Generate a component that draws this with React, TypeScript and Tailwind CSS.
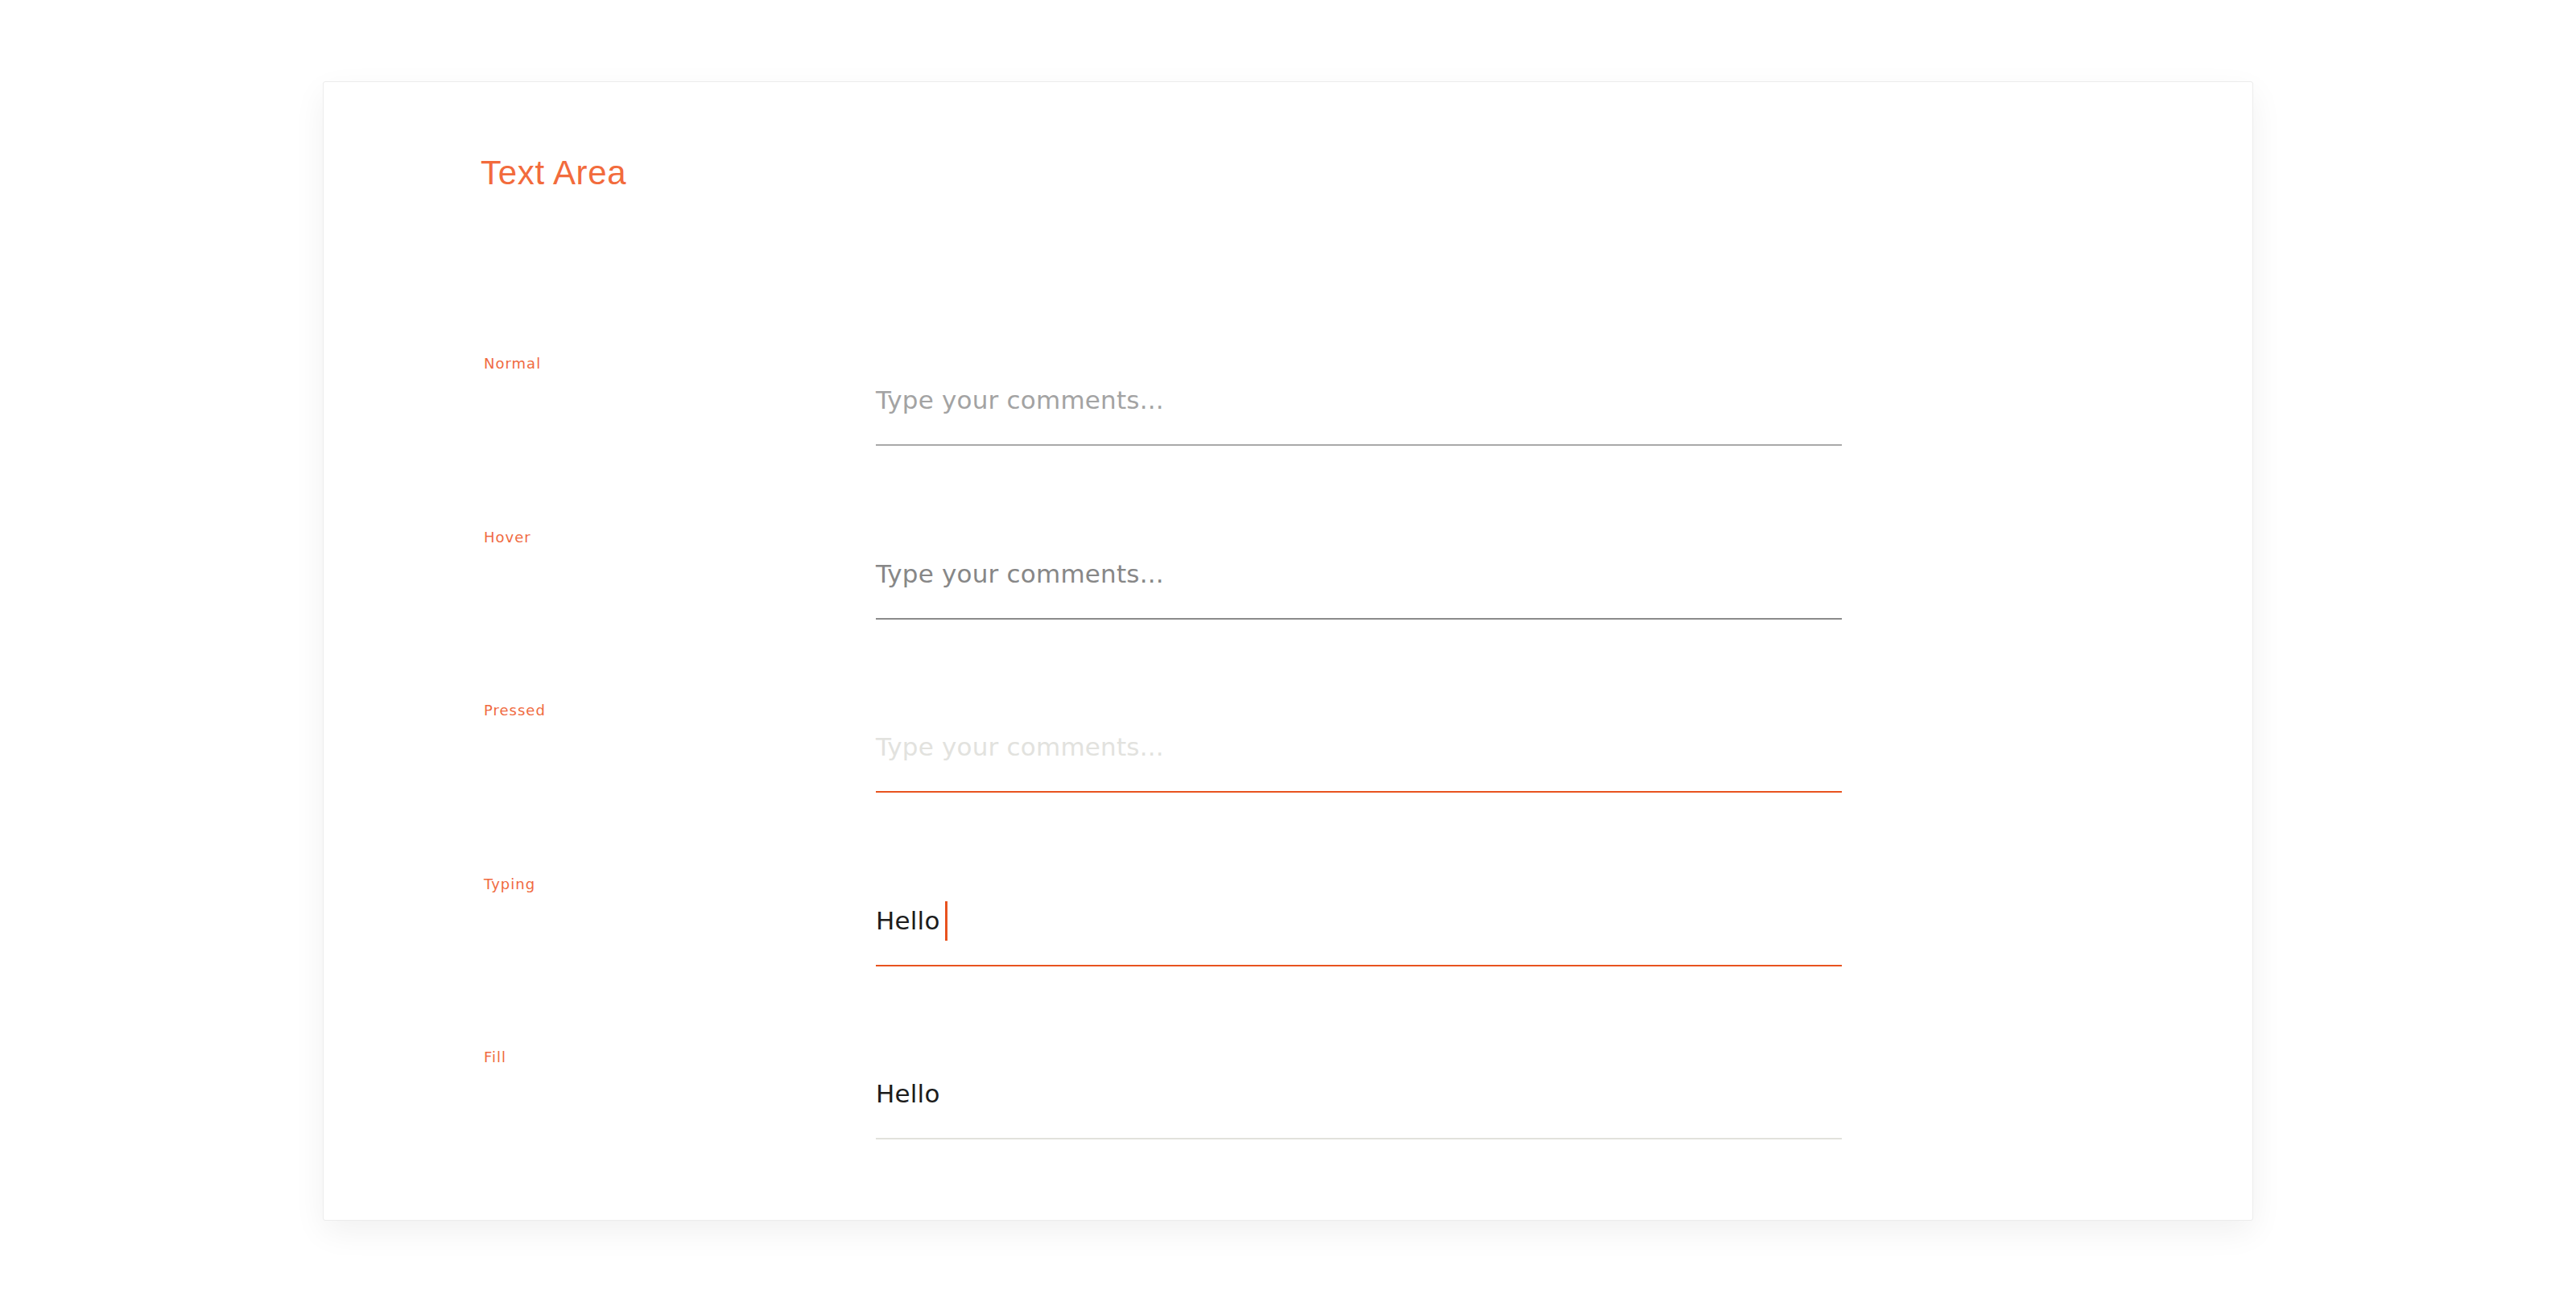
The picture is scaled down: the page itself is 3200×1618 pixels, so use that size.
import React from 'react'

type Row = {
  label: string
  text: string
  textColor: string
  line: string
  caret?: boolean
}

const rows: Row[] = [
  { label: 'Normal', text: 'Type your comments...', textColor: 'text-[#a3a3a3]', line: 'border-[#a9a9a9]' },
  { label: 'Hover', text: 'Type your comments...', textColor: 'text-[#878787]', line: 'border-[#8b8b8b]' },
  { label: 'Pressed', text: 'Type your comments...', textColor: 'text-[#e2e2de]', line: 'border-[#e8531f]' },
  { label: 'Typing', text: 'Hello', textColor: 'text-[#1c1c1c]', line: 'border-[#e8531f]', caret: true },
  { label: 'Fill', text: 'Hello', textColor: 'text-[#1c1c1c]', line: 'border-[#e2e2dc]' },
]

function FieldRow({ row, last }: { row: Row; last: boolean }) {
  return (
    <div className={`flex items-start ${last ? '' : 'h-[215.5px]'}`}>
      <div className="ml-[4px] w-[487px] shrink-0">
        <span className="block whitespace-nowrap text-[18px] leading-none tracking-[1px] text-[#f06a3f]">
          {row.label}
        </span>
      </div>
      <div className={`w-[1200px] border-b-2 pt-[39px] pb-[39px] ${row.line}`}>
        <div className="flex h-[31px] items-center">
          <span className={`block whitespace-nowrap text-[31px] leading-none tracking-[0.2px] ${row.textColor}`}>
            {row.text}
          </span>
          {row.caret && <span className="ml-[6px] block h-[49px] w-[3px] shrink-0 bg-[#e8531f]" />}
        </div>
      </div>
    </div>
  )
}

export default function App() {
  return (
    <div className="min-h-screen bg-white pt-[101px] pb-[102px] font-['DejaVu_Sans',sans-serif]">
      <div className="mx-auto w-[2398px] rounded-[3px] border border-[#ececec] bg-white pt-[92px] pb-[100px] pl-[195px] shadow-[0_14px_40px_rgba(0,0,0,0.06)]">
        <h1 className="font-['Liberation_Sans',Arial,sans-serif] text-[42px] leading-none tracking-[0.7px] text-[#f26b3c]">
          Text Area
        </h1>
        <div className="mt-[207px] flex flex-col">
          {rows.map((row, i) => (
            <FieldRow key={row.label} row={row} last={i === rows.length - 1} />
          ))}
        </div>
      </div>
    </div>
  )
}
